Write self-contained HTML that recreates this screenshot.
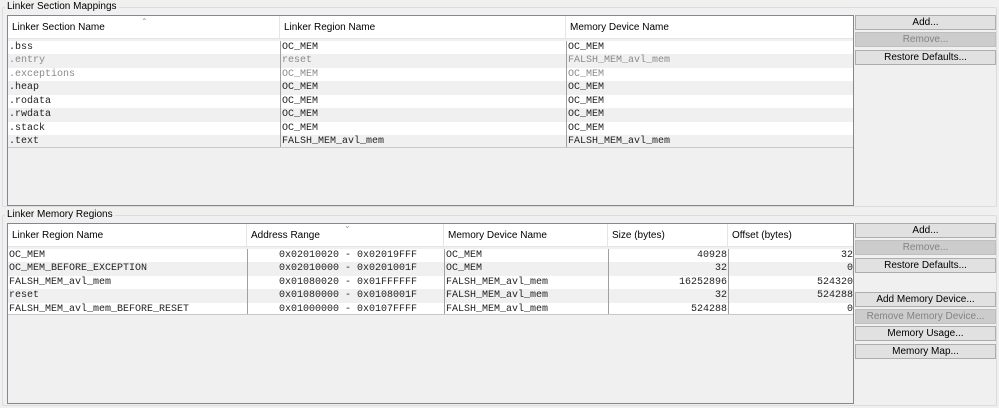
<!DOCTYPE html>
<html><head><meta charset="utf-8"><style>
*{margin:0;padding:0;box-sizing:border-box}
body{width:999px;height:408px;background:#f0f0f0;position:relative;overflow:hidden;font-family:"Liberation Sans",sans-serif;font-size:11px;color:#000}
.abs{position:absolute}
.grp{position:absolute;border:1px solid #dcdcdc;border-radius:2px}
.title{position:absolute;background:#f0f0f0;padding:0 2px;font-size:10px;line-height:12px}
.tbl{position:absolute;border:1px solid #828790;background:#f0f0f0;overflow:hidden}
.hdr{position:absolute;left:0;top:0;right:0;height:23px;background:#fff;border-bottom:1px solid #e5e5e5}
.hc{position:absolute;top:0;height:23px;line-height:23px;padding-left:4px;font-size:10px;border-right:1px solid #e5e5e5}
.row{position:absolute;left:0;height:13.5px;background:#fff}
.row.alt{background:#f0f0f0}
.c{position:absolute;top:0;height:13.5px;line-height:13.5px;font-family:"Liberation Mono",monospace;font-size:10px;padding-left:1px;white-space:nowrap;overflow:hidden;border-left:1px solid #a0a0a0;color:#222}
.c.f{border-left:none}
.g .c{color:#8a8a8a}
.r{text-align:right;padding-right:1px}
.btn{position:absolute;left:855px;width:141px;height:15px;background:#e1e1e1;border:1px solid #adadad;text-align:center;line-height:13px;font-size:10px}
.btn.d{background:#cccccc;border-color:#bfbfbf;color:#838383}
</style></head><body>
<div class="grp" style="left:2px;top:7px;width:995px;height:200px"></div>
<div class="title" style="left:5px;top:1px">Linker Section Mappings</div>
<div class="tbl" style="left:7px;top:15px;width:847px;height:191px">
 <div class="hdr">
  <div class="hc" style="left:0;width:272px">Linker Section Name</div>
  <div class="hc" style="left:272px;width:286px">Linker Region Name</div>
  <div class="hc" style="left:558px;width:288px;border-right:none">Memory Device Name</div>
  <div class="abs" style="left:133px;top:1px;font-size:8px;color:#999">&#8963;</div>
 </div>
 <div class="row" style="top:24.5px;width:846px"><div class="c f" style="left:0;width:272px">.bss</div><div class="c" style="left:272px;width:286px">OC_MEM</div><div class="c" style="left:558px;width:288px">OC_MEM</div></div>
 <div class="row alt g" style="top:38px;width:846px"><div class="c f" style="left:0;width:272px">.entry</div><div class="c" style="left:272px;width:286px">reset</div><div class="c" style="left:558px;width:288px">FALSH_MEM_avl_mem</div></div>
 <div class="row g" style="top:51.5px;width:846px"><div class="c f" style="left:0;width:272px">.exceptions</div><div class="c" style="left:272px;width:286px">OC_MEM</div><div class="c" style="left:558px;width:288px">OC_MEM</div></div>
 <div class="row alt" style="top:65px;width:846px"><div class="c f" style="left:0;width:272px">.heap</div><div class="c" style="left:272px;width:286px">OC_MEM</div><div class="c" style="left:558px;width:288px">OC_MEM</div></div>
 <div class="row" style="top:78.5px;width:846px"><div class="c f" style="left:0;width:272px">.rodata</div><div class="c" style="left:272px;width:286px">OC_MEM</div><div class="c" style="left:558px;width:288px">OC_MEM</div></div>
 <div class="row alt" style="top:92px;width:846px"><div class="c f" style="left:0;width:272px">.rwdata</div><div class="c" style="left:272px;width:286px">OC_MEM</div><div class="c" style="left:558px;width:288px">OC_MEM</div></div>
 <div class="row" style="top:105.5px;width:846px"><div class="c f" style="left:0;width:272px">.stack</div><div class="c" style="left:272px;width:286px">OC_MEM</div><div class="c" style="left:558px;width:288px">OC_MEM</div></div>
 <div class="row alt" style="top:119px;width:846px;height:12px;overflow:hidden"><div class="c f" style="left:0;width:272px">.text</div><div class="c" style="left:272px;width:286px">FALSH_MEM_avl_mem</div><div class="c" style="left:558px;width:288px">FALSH_MEM_avl_mem</div></div>
 <div class="abs" style="left:0;top:131px;width:846px;height:1px;background:#c8c8c8"></div>
</div>
<div class="btn" style="top:15px">Add...</div>
<div class="btn d" style="top:32px">Remove...</div>
<div class="btn" style="top:50px">Restore Defaults...</div>

<div class="grp" style="left:2px;top:215px;width:995px;height:191px"></div>
<div class="title" style="left:5px;top:209px">Linker Memory Regions</div>
<div class="tbl" style="left:7px;top:223px;width:847px;height:181px">
 <div class="hdr">
  <div class="hc" style="left:0;width:239px">Linker Region Name</div>
  <div class="hc" style="left:239px;width:197px">Address Range</div>
  <div class="hc" style="left:436px;width:164px">Memory Device Name</div>
  <div class="hc" style="left:600px;width:120px">Size (bytes)</div>
  <div class="hc" style="left:720px;width:126px;border-right:none">Offset (bytes)</div>
  <div class="abs" style="left:336px;top:-3px;font-size:8px;color:#999">&#8964;</div>
 </div>
 <div class="row" style="top:24.5px;width:846px"><div class="c f" style="left:0;width:239px">OC_MEM</div><div class="c" style="left:239px;width:197px;padding-left:31px">0x02010020 - 0x02019FFF</div><div class="c" style="left:436px;width:164px">OC_MEM</div><div class="c r" style="left:600px;width:120px">40928</div><div class="c r" style="left:720px;width:126px">32</div></div>
 <div class="row alt" style="top:38px;width:846px"><div class="c f" style="left:0;width:239px">OC_MEM_BEFORE_EXCEPTION</div><div class="c" style="left:239px;width:197px;padding-left:31px">0x02010000 - 0x0201001F</div><div class="c" style="left:436px;width:164px">OC_MEM</div><div class="c r" style="left:600px;width:120px">32</div><div class="c r" style="left:720px;width:126px">0</div></div>
 <div class="row" style="top:51.5px;width:846px"><div class="c f" style="left:0;width:239px">FALSH_MEM_avl_mem</div><div class="c" style="left:239px;width:197px;padding-left:31px">0x01080020 - 0x01FFFFFF</div><div class="c" style="left:436px;width:164px">FALSH_MEM_avl_mem</div><div class="c r" style="left:600px;width:120px">16252896</div><div class="c r" style="left:720px;width:126px">524320</div></div>
 <div class="row alt" style="top:65px;width:846px"><div class="c f" style="left:0;width:239px">reset</div><div class="c" style="left:239px;width:197px;padding-left:31px">0x01080000 - 0x0108001F</div><div class="c" style="left:436px;width:164px">FALSH_MEM_avl_mem</div><div class="c r" style="left:600px;width:120px">32</div><div class="c r" style="left:720px;width:126px">524288</div></div>
 <div class="row" style="top:78.5px;width:846px;height:11px;overflow:hidden"><div class="c f" style="left:0;width:239px">FALSH_MEM_avl_mem_BEFORE_RESET</div><div class="c" style="left:239px;width:197px;padding-left:31px">0x01000000 - 0x0107FFFF</div><div class="c" style="left:436px;width:164px">FALSH_MEM_avl_mem</div><div class="c r" style="left:600px;width:120px">524288</div><div class="c r" style="left:720px;width:126px">0</div></div>
 <div class="abs" style="left:0;top:89.5px;width:846px;height:1px;background:#c8c8c8"></div>
</div>
<div class="btn" style="top:223px">Add...</div>
<div class="btn d" style="top:240px">Remove...</div>
<div class="btn" style="top:258px">Restore Defaults...</div>
<div class="btn" style="top:292px">Add Memory Device...</div>
<div class="btn d" style="top:309px">Remove Memory Device...</div>
<div class="btn" style="top:326px">Memory Usage...</div>
<div class="btn" style="top:344px">Memory Map...</div>
</body></html>
